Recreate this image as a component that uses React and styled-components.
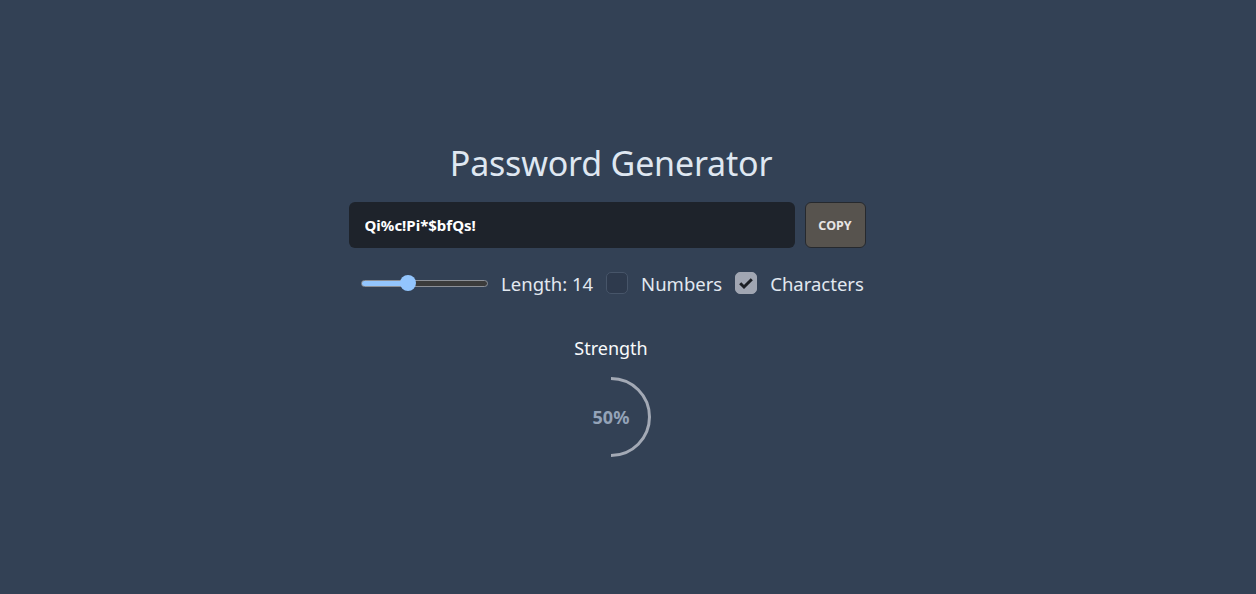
import React, { useState } from "react";
import styled, { createGlobalStyle } from "styled-components";

const Global = createGlobalStyle`
  html, body { margin: 0; padding: 0; background: #334155; }
  body { font-family: "Noto Sans", "Open Sans", sans-serif; }
`;

const Page = styled.main`
  min-height: 594px;
  box-sizing: border-box;
  padding: 143px 34px 0 0;
  display: flex;
  flex-direction: column;
  align-items: center;
`;

const Title = styled.h1`
  margin: 0;
  font-size: 34px;
  line-height: 40px;
  font-weight: 400;
  color: #dfe7f1;
  letter-spacing: -0.2px;
`;

const InputRow = styled.div`
  margin-top: 19px;
  display: flex;
  gap: 10px;
  margin-left: -8px;
`;

const PasswordField = styled.input`
  width: 446px;
  height: 46px;
  box-sizing: border-box;
  border: none;
  border-radius: 6px;
  background: #1e232b;
  color: #ffffff;
  font-family: inherit;
  font-weight: 700;
  font-size: 15px;
  padding: 0 16px;
  outline: none;
`;

const CopyButton = styled.button`
  width: 61px;
  height: 46px;
  box-sizing: border-box;
  border-radius: 6px;
  border: 1px solid #26292e;
  background: #57534e;
  color: #e7e5e4;
  font-family: inherit;
  font-weight: 700;
  font-size: 12.5px;
  cursor: pointer;
`;

const Controls = styled.div`
  margin-top: 20px;
  display: flex;
  align-items: center;
  height: 30px;
  color: #e2e8f0;
  font-size: 18.5px;
  margin-left: 15px;
`;

const Range = styled.input`
  -webkit-appearance: none;
  appearance: none;
  width: 127px;
  height: 7px;
  margin: 0 13px 0 0;
  border-radius: 4px;
  border: 1px solid #8b8f96;
  box-sizing: border-box;
  background: linear-gradient(
    to right,
    #93c5fd 0%,
    #93c5fd ${(p) => p.$pct}%,
    #3b3b3b ${(p) => p.$pct}%,
    #3b3b3b 100%
  );
  outline: none;
  &::-webkit-slider-thumb {
    -webkit-appearance: none;
    width: 16px;
    height: 16px;
    border-radius: 50%;
    background: #93c5fd;
    border: none;
  }
`;

const Label = styled.span`
  margin-right: ${(p) => p.$gap || 12}px;
  white-space: nowrap;
`;

const Box = styled.span`
  width: 22px;
  height: 22px;
  box-sizing: border-box;
  border-radius: 5px;
  margin-right: 13px;
  display: inline-flex;
  align-items: center;
  justify-content: center;
  border: 1px solid ${(p) => (p.$checked ? "#a1a6b2" : "#475569")};
  background: ${(p) => (p.$checked ? "#a1a6b2" : "#2e3a4d")};
`;

const Strength = styled.section`
  margin-top: 38px;
  display: flex;
  flex-direction: column;
  align-items: center;
`;

const StrengthLabel = styled.div`
  color: #f8fafc;
  font-size: 18px;
  line-height: 24px;
`;

const Gauge = styled.div`
  margin-top: 17px;
  position: relative;
  width: 80px;
  height: 80px;
  display: flex;
  align-items: center;
  justify-content: center;
`;

const GaugeSvg = styled.svg`
  position: absolute;
  inset: 0;
`;

const GaugeText = styled.span`
  color: #94a3b8;
  font-weight: 700;
  font-size: 18px;
`;

function Check({ checked }) {
  return (
    <Box $checked={checked}>
      {checked && (
        <svg width="16" height="16" viewBox="0 0 16 16">
          <path d="M2.2 8.2 L6 12 L13.8 4.2" fill="none" stroke="#1c1f24" strokeWidth="3" />
        </svg>
      )}
    </Box>
  );
}

export default function App() {
  const [len, setLen] = useState(14);
  const min = 6;
  const max = 29;
  const pct = 8 + ((len - min) / (max - min)) * 84;
  return (
    <>
      <Global />
      <Page>
        <Title>Password Generator</Title>
        <InputRow>
          <PasswordField readOnly value="Qi%c!Pi*$bfQs!" />
          <CopyButton>COPY</CopyButton>
        </InputRow>
        <Controls>
          <Range
            type="range"
            min={min}
            max={max}
            value={len}
            $pct={pct}
            onChange={(e) => setLen(+e.target.value)}
          />
          <Label $gap={13}>Length: {len}</Label>
          <Check checked={false} />
          <Label $gap={13}>Numbers</Label>
          <Check checked />
          <Label $gap={0}>Characters</Label>
        </Controls>
        <Strength>
          <StrengthLabel>Strength</StrengthLabel>
          <Gauge>
            <GaugeSvg width="80" height="80" viewBox="0 0 80 80">
              <path d="M40 1.5 A38.5 38.5 0 0 1 40 78.5" fill="none" stroke="#a3a9b5" strokeWidth="3" />
            </GaugeSvg>
            <GaugeText>50%</GaugeText>
          </Gauge>
        </Strength>
      </Page>
    </>
  );
}
